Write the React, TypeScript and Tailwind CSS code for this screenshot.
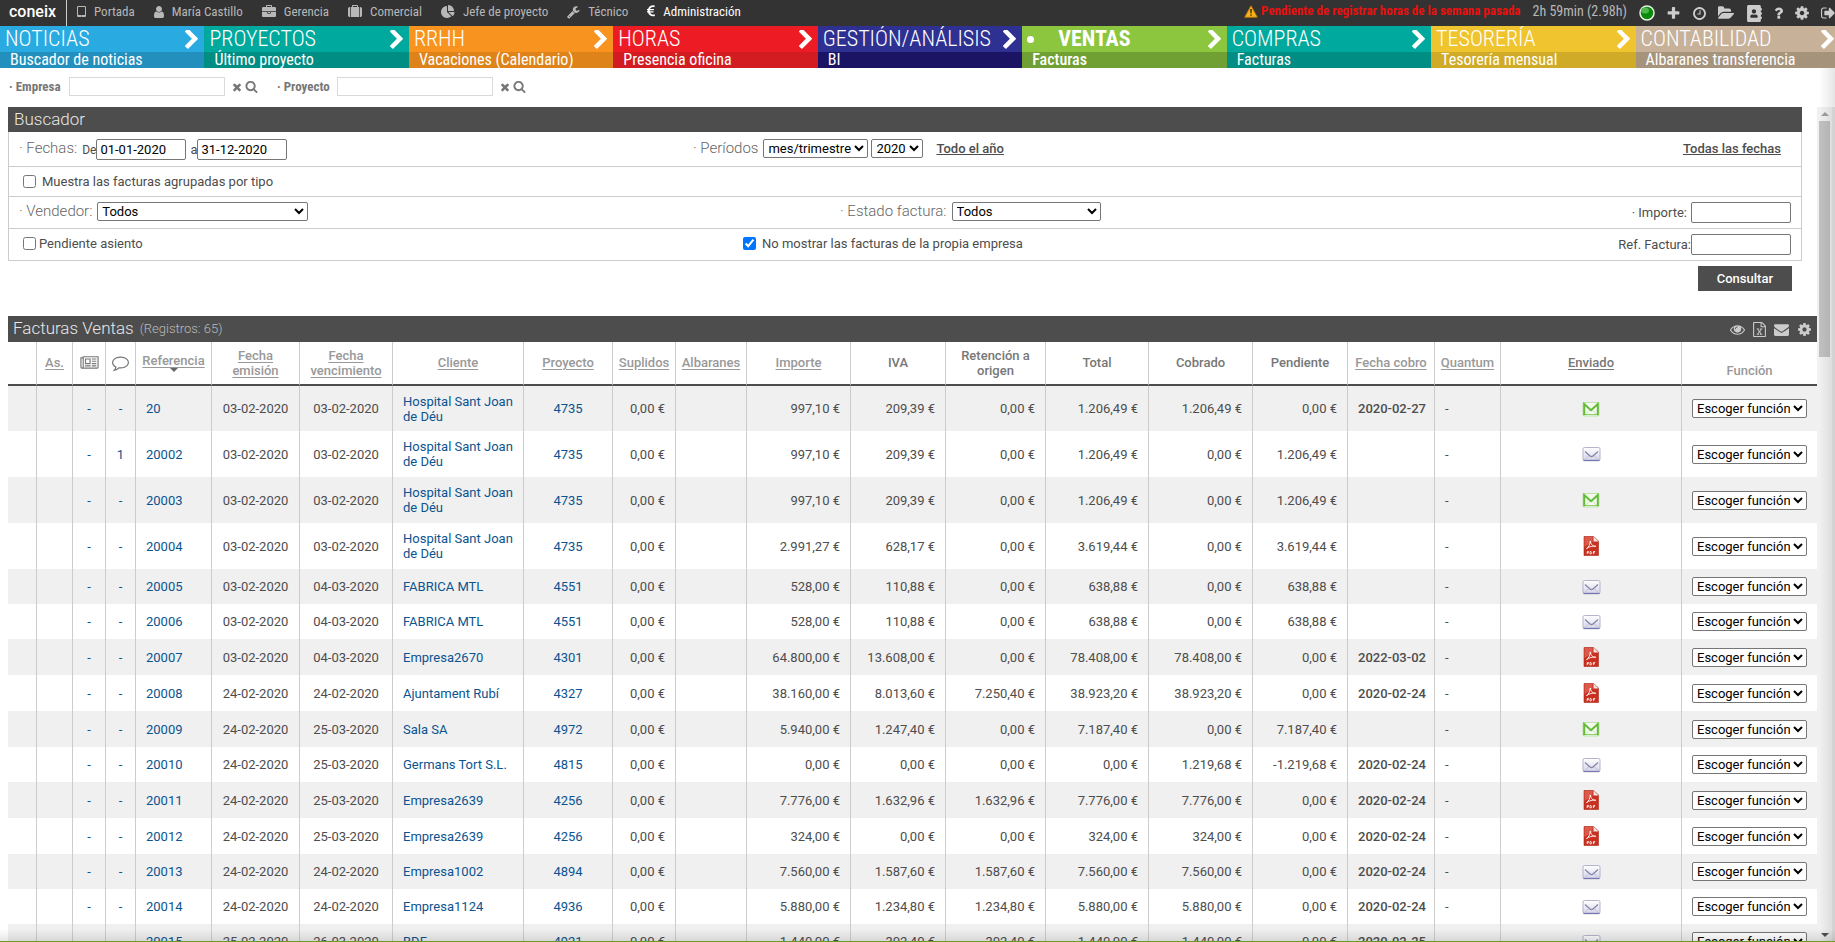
import React from "react";
import { FaAddressBook } from "react-icons/fa";

const ICONS = {
  tablet:
    "M960 1408q0-26-19-45t-45-19-45 19-19 45 19 45 45 19 45-19 19-45zm384-160v-960q0-13-9.500-22.500t-22.500-9.500h-832q-13 0-22.500 9.500t-9.500 22.500v960q0 13 9.500 22.500t22.500 9.500h832q13 0 22.500-9.500t9.500-22.500zm128-960v1088q0 66-47 113t-113 47h-832q-66 0-113-47t-47-113v-1088q0-66 47-113t113-47h832q66 0 113 47t47 113z",
  user:
    "M1536 1399q0 109-62.500 187t-150.500 78h-854q-88 0-150.500-78t-62.500-187q0-85 8.500-160.500t31.500-152 58.500-131 94-89 134.500-34.500q131 128 313 128t313-128q76 0 134.500 34.500t94 89 58.500 131 31.500 152 8.500 160.500zm-256-887q0 159-112.500 271.500t-271.500 112.500-271.500-112.500-112.500-271.500 112.500-271.500 271.500-112.500 271.500 112.500 112.500 271.500z",
  briefcase:
    "M640 256h512v-128h-512v128zm1152 640v480q0 66-47 113t-113 47h-1472q-66 0-113-47t-47-113v-480h672v160q0 26 19 45t45 19h320q26 0 45-19t19-45v-160h672zm-768 0v128h-256v-128h256zm768-480v384h-1792v-384q0-66 47-113t113-47h352v-160q0-40 28-68t68-28h576q40 0 68 28t28 68v160h352q66 0 113 47t47 113z",
  suitcase:
    "M640 256h512v-128h-512v128zm-352 0v1280h-64q-92 0-158-66t-66-158v-832q0-92 66-158t158-66h64zm1120 0v1280h-1024v-1280h128v-160q0-40 28-68t68-28h576q40 0 68 28t28 68v160h128zm384 224v832q0 92-66 158t-158 66h-64v-1280h64q92 0 158 66t66 158z",
  pie:
    "M768 890l546 546q-106 108-247.500 168t-298.500 60q-209 0-385.500-103t-279.500-279.500-103-385.500 103-385.500 279.500-279.500 385.500-103v762zm187 6h773q0 157-60 298.500t-168 247.500zm709-128h-768v-768q209 0 385.500 103t279.500 279.500 103 385.500z",
  wrench:
    "M448 1472q0-26-19-45t-45-19-45 19-19 45 19 45 45 19 45-19 19-45zm644-420l-682 682q-37 37-90 37-52 0-91-37l-106-108q-38-36-38-90 0-53 38-91l681-681q39 98 114.500 173.500t173.500 114.500zm634-435q0 39-23 106-47 134-164.500 217.500t-258.500 83.500q-185 0-316.500-131.500t-131.500-316.500 131.500-316.500 316.500-131.500q58 0 121.500 16.500t107.500 46.500q16 11 16 28t-16 28l-293 169v224l193 107q5-3 79-48.500t135.500-81 70.500-35.500q15 0 23.500 10t8.500 25z",
  euro:
    "M1362 1214l35 159q3 12-3 22.500t-17 14.500l-5 1q-4 2-10.500 3.500t-16 4.500-21.500 5.500-25.500 5-30 5-33.500 4.500-36.500 3-38.500 1q-234 0-409-130.500t-238-351.500h-95q-13 0-22.500-9.500t-9.500-22.500v-113q0-13 9.500-22.500t22.500-9.500h66q-2-57 1-105h-67q-14 0-23-9t-9-23v-114q0-14 9-23t23-9h98q67-210 243.500-338t400.500-128q102 0 194 23 11 3 20 15 6 11 3 24l-43 159q-3 13-14 19.500t-24 2.500l-4-1q-4-1-11.500-2.500l-17.500-3.500-22.500-3.500-26-3-29-2.500-29.500-1q-126 0-226 64t-150 176h468q16 0 25 12 10 12 7 26l-24 114q-5 26-32 26h-488q-3 37 0 105h459q15 0 25 12 9 12 6 27l-24 112q-2 11-11 18.500t-20 7.500h-387q48 117 149.500 185.500t228.500 68.500q18 0 36-1.500t33.500-3.500 29.500-4.500 24.500-5 18.500-4.500l12-3 5-2q13-5 26 2 12 7 15 21z",
  plus:
    "M1600 736v192q0 40-28 68t-68 28h-416v416q0 40-28 68t-68 28h-192q-40 0-68-28t-28-68v-416h-416q-40 0-68-28t-28-68v-192q0-40 28-68t68-28h416v-416q0-40 28-68t68-28h192q40 0 68 28t28 68v416h416q40 0 68 28t28 68z",
  clock:
    "M1024 544v448q0 14-9 23t-23 9h-320q-14 0-23-9t-9-23v-64q0-14 9-23t23-9h224v-352q0-14 9-23t23-9h64q14 0 23 9t9 23zm416 352q0-148-73-273t-198-198-273-73-273 73-198 198-73 273 73 273 198 198 273 73 273-73 198-198 73-273zm224 0q0 209-103 385.500t-279.500 279.500-385.500 103-385.500-103-279.500-279.500-103-385.500 103-385.500 279.500-279.500 385.500-103 385.500 103 279.500 279.500 103 385.500z",
  folder:
    "M1815 952q0 31-31 66l-336 396q-43 51-120.500 86.500t-143.500 35.500h-1088q-34 0-60.500-13t-26.500-43q0-31 31-66l336-396q43-51 120.500-86.500t143.500-35.500h1088q34 0 60.500 13t26.500 43zm-343-344v160h-832q-94 0-197 47.500t-164 119.500l-337 396-5 6q0-4-.5-12.500t-.5-12.500v-960q0-92 66-158t158-66h320q92 0 158 66t66 158v32h544q92 0 158 66t66 158z",
  question:
    "M1088 1256v240q0 16-12 28t-28 12h-240q-16 0-28-12t-12-28v-240q0-16 12-28t28-12h240q16 0 28 12t12 28zm316-600q0 54-15.500 101t-35 76.500-55 59.500-57.500 43.500-61 35.500q-41 23-68.500 65t-27.500 67q0 17-12 32.500t-28 15.500h-240q-15 0-25.500-18.500t-10.500-37.500v-45q0-83 65-156.500t143-108.500q59-27 84-56t25-76q0-42-46.500-74t-107.500-32q-65 0-108 29-35 25-107 115-13 16-31 16-12 0-25-8l-164-125q-13-10-15.500-25t5.500-28q160-266 464-266 80 0 161 31t146 83 106 127.500 41 158.500z",
  cog:
    "M1152 896q0-106-75-181t-181-75-181 75-75 181 75 181 181 75 181-75 75-181zm512-109v222q0 12-8 23t-20 13l-185 28q-19 54-39 91 35 50 107 138 10 12 10 25t-9 23q-27 37-99 108t-94 71q-12 0-26-9l-138-108q-44 23-91 38-16 136-29 186-7 28-36 28h-222q-14 0-24.500-8.500t-11.500-21.500l-28-184q-49-16-90-37l-141 107q-10 9-25 9-14 0-25-11-126-114-165-168-7-10-7-23 0-12 8-23 15-21 51-66.500t54-70.500q-27-50-41-99l-183-27q-13-2-21-12.500t-8-23.500v-222q0-12 8-23t19-13l186-28q14-46 39-92-40-57-107-138-10-12-10-24 0-10 9-23 26-36 98.500-107.500t94.500-71.500q13 0 26 10l138 107q44-23 91-38 16-136 29-186 7-28 36-28h222q14 0 24.500 8.500t11.500 21.500l28 184q49 16 90 37l142-107q9-9 24-9 13 0 25 10 129 119 165 170 7 8 7 22 0 12-8 23-15 21-51 66.500t-54 70.500q26 50 41 98l183 28q13 2 21 12.500t8 23.500z",
  exit:
    "M704 1440q0 4 1 20t.5 26.500-3 23.500-10 19.500-20.500 6.500h-320q-119 0-203.500-84.500t-84.500-203.500v-704q0-119 84.500-203.500t203.500-84.500h320q13 0 22.500 9.500t9.500 22.500q0 4 1 20t.5 26.500-3 23.500-10 19.500-20.500 6.500h-320q-66 0-113 47t-47 113v704q0 66 47 113t113 47h312l11.500 1 11.500 3 8 5.500 7 9 2 13.500zm928-544q0 26-19 45l-544 544q-19 19-45 19t-45-19-19-45v-288h-448q-26 0-45-19t-19-45v-384q0-26 19-45t45-19h448v-288q0-26 19-45t45-19 45 19l544 544q19 19 19 45z",
  chevron:
    "M1363 877l-742 742q-19 19-45 19t-45-19l-166-166q-19-19-19-45t19-45l531-531-531-531q-19-19-19-45t19-45l166-166q19-19 45-19t45 19l742 742q19 19 19 45t-19 45z",
  times:
    "M1490 1322q0 40-28 68l-136 136q-28 28-68 28t-68-28l-294-294-294 294q-28 28-68 28t-68-28l-136-136q-28-28-28-68t28-68l294-294-294-294q-28-28-28-68t28-68l136-136q28-28 68-28t68 28l294 294 294-294q28-28 68-28t68 28l136 136q28 28 28 68t-28 68l-294 294 294 294q28 28 28 68z",
  search:
    "M1216 832q0-185-131.500-316.500t-316.500-131.500-316.500 131.500-131.500 316.500 131.500 316.500 316.500 131.500 316.500-131.500 131.500-316.500zm512 832q0 52-38 90t-90 38q-54 0-90-38l-343-342q-179 124-399 124-143 0-273.500-55.500t-225-150-150-225-55.500-273.500 55.500-273.500 150-225 225-150 273.500-55.500 273.500 55.500 225 150 150 225 55.500 273.500q0 220-124 399l343 343q37 37 37 90z",
  eye:
    "M1664 960q-152-236-381-353 61 104 61 225 0 185-131.500 316.500t-316.500 131.500-316.500-131.500-131.500-316.500q0-121 61-225-229 117-381 353 133 205 333.500 326.500t434.500 121.500 434.500-121.500 333.500-326.500zm-720-384q0-20-14-34t-34-14q-125 0-214.500 89.500t-89.500 214.500q0 20 14 34t34 14 34-14 14-34q0-86 61-147t147-61q20 0 34-14t14-34zm848 384q0 34-20 69-140 230-376.500 368.500t-499.500 138.500-499.500-139-376.500-368q-20-35-20-69t20-69q140-229 376.500-368t499.500-139 499.500 139 376.500 368q20 35 20 69z",
  excel:
    "M1596 380q28 28 48 76t20 88v1152q0 40-28 68t-68 28h-1344q-40 0-68-28t-28-68v-1600q0-40 28-68t68-28h896q40 0 88 20t76 48zm-444-244v376h376q-10-29-22-41l-313-313q-12-12-41-22zm384 1528v-1024h-416q-40 0-68-28t-28-68v-416h-768v1536h1280zm-979-234v106h281v-106h-75l103-161q5-7 10-16.500t7.500-13.500 3.500-4h2q1 4 5 10 2 4 4.500 7.500t6 8 6.500 8.500l107 161h-76v106h291v-106h-68l-192-273 195-282h67v-107h-279v107h74l-103 159q-4 7-10 16.500t-9 13.500l-2 3h-2q-1-4-5-10-6-11-17-23l-106-159h76v-107h-290v107h68l189 272-194 283h-68z",
  envelope:
    "M1792 710v794q0 66-47 113t-113 47h-1472q-66 0-113-47t-47-113v-794q44 49 101 87 362 246 497 345 57 42 92.500 65.500t94.500 48 110 24.500h2q51 0 110-24.500t94.500-48 92.500-65.500q170-123 498-345 57-39 100-87zm0-294q0 79-49 151t-122 123q-376 261-468 325-10 7-42.500 31t-54 38.500-52 32.500-57.500 27-50 9h-2q-23 0-50-9t-57.500-27-52-32.500-54-38.500-42.500-31q-91-64-262-182.500t-205-142.500q-62-42-117-115.500t-55-136.500q0-78 41.500-130t118.500-52h1472q65 0 112.500 47t47.500 113z",
  comment:
    "M896 384q-204 0-381.500 69.500t-282 187.500-104.500 255q0 112 71.500 213.500t201.500 175.500l87 50-27 96q-24 91-70 172 152-63 275-171l43-38 57 6q69 8 130 8 204 0 381.500-69.500t282-187.500 104.500-255-104.500-255-282-187.500-381.500-69.500zm896 512q0 174-120 321.500t-326 233-450 85.500q-70 0-145-8-198 175-460 242-49 14-114 22h-5q-15 0-27-10.500t-16-27.500v-1q-3-4-.5-12t2-10 4.500-9.500l6-9 7-8.500 8-9q7-8 31-34.500t34.500-38 31-39.500 32.500-51 27-59 26-76q-157-89-247.500-220t-90.500-281q0-174 120-321.500t326-233 450-85.500 450 85.500 326 233 120 321.500z",
  news:
    "M1024 512h-384v384h384v-384zm128 640v128h-640v-128h640zm0-768v640h-640v-640h640zm640 768v128h-512v-128h512zm0-256v128h-512v-128h512zm0-256v128h-512v-128h512zm0-256v128h-512v-128h512zm-1536 960v-960h-128v960q0 26 19 45t45 19 45-19 19-45zm1664 0v-1088h-1536v1088q0 33-11 64h1483q26 0 45-19t19-45zm128-1216v1216q0 80-56 136t-136 56h-1664q-80 0-136-56t-56-136v-1088h256v-128h1792z",
};

type IconName = keyof typeof ICONS;

function Icon({ name, box = "0 0 1792 1792", className }: { name: IconName; box?: string; className: string }) {
  return (
    <svg viewBox={box} className={`shrink-0 fill-current ${className}`} aria-hidden="true">
      <path d={ICONS[name]} />
    </svg>
  );
}

const MENU: { icon: IconName; box: string; size: string; label: string; active?: boolean }[] = [
  { icon: "tablet", box: "320 0 1152 1792", size: "h-[14px] w-[9px]", label: "Portada" },
  { icon: "user", box: "256 0 1280 1792", size: "h-[14px] w-[10px]", label: "María Castillo" },
  { icon: "briefcase", box: "0 0 1792 1792", size: "h-[14px] w-[14px]", label: "Gerencia" },
  { icon: "suitcase", box: "0 0 1792 1792", size: "h-[14px] w-[14px]", label: "Comercial" },
  { icon: "pie", box: "0 0 1792 1792", size: "h-[14px] w-[14px]", label: "Jefe de proyecto" },
  { icon: "wrench", box: "64 0 1728 1792", size: "h-[14px] w-[13px]", label: "Técnico" },
  { icon: "euro", box: "384 0 1024 1792", size: "h-[14px] w-[8px]", label: "Administración", active: true },
];

const TABS = [
  { title: "NOTICIAS", sub: "Buscador de noticias", top: "bg-[#29abe2]", bottom: "bg-[#238fbd]" },
  { title: "PROYECTOS", sub: "Último proyecto", top: "bg-[#00a99d]", bottom: "bg-[#008d83]" },
  { title: "RRHH", sub: "Vacaciones (Calendario)", top: "bg-[#f7931e]", bottom: "bg-[#de831a]" },
  { title: "HORAS", sub: "Presencia oficina", top: "bg-[#ed1c24]", bottom: "bg-[#d31b22]" },
  { title: "GESTIÓN/ANÁLISIS", sub: "BI", top: "bg-[#2e3192]", bottom: "bg-[#1b1464]" },
  { title: "VENTAS", sub: "Facturas", top: "bg-[#8cc63f]", bottom: "bg-[#70a033]", active: true },
  { title: "COMPRAS", sub: "Facturas", top: "bg-[#00a99d]", bottom: "bg-[#008d83]" },
  { title: "TESORERÍA", sub: "Tesorería mensual", top: "bg-[#efc42f]", bottom: "bg-[#d0ab28]" },
  { title: "CONTABILIDAD", sub: "Albaranes transferencia", top: "bg-[#c7b299]", bottom: "bg-[#a6937c]" },
];

type Sent = "green" | "mail" | "pdf";
type Row = [string, string, string, string, string, string, string, string, string, string, string, string, string, Sent];

const HSJ = "Hospital Sant Joan de Déu";
const ROWS: Row[] = [
  ["-", "20", "03-02-2020", "03-02-2020", HSJ, "4735", "997,10", "209,39", "0,00", "1.206,49", "1.206,49", "0,00", "2020-02-27", "green"],
  ["1", "20002", "03-02-2020", "03-02-2020", HSJ, "4735", "997,10", "209,39", "0,00", "1.206,49", "0,00", "1.206,49", "", "mail"],
  ["-", "20003", "03-02-2020", "03-02-2020", HSJ, "4735", "997,10", "209,39", "0,00", "1.206,49", "0,00", "1.206,49", "", "green"],
  ["-", "20004", "03-02-2020", "03-02-2020", HSJ, "4735", "2.991,27", "628,17", "0,00", "3.619,44", "0,00", "3.619,44", "", "pdf"],
  ["-", "20005", "03-02-2020", "04-03-2020", "FABRICA MTL", "4551", "528,00", "110,88", "0,00", "638,88", "0,00", "638,88", "", "mail"],
  ["-", "20006", "03-02-2020", "04-03-2020", "FABRICA MTL", "4551", "528,00", "110,88", "0,00", "638,88", "0,00", "638,88", "", "mail"],
  ["-", "20007", "03-02-2020", "04-03-2020", "Empresa2670", "4301", "64.800,00", "13.608,00", "0,00", "78.408,00", "78.408,00", "0,00", "2022-03-02", "pdf"],
  ["-", "20008", "24-02-2020", "24-02-2020", "Ajuntament Rubí", "4327", "38.160,00", "8.013,60", "7.250,40", "38.923,20", "38.923,20", "0,00", "2020-02-24", "pdf"],
  ["-", "20009", "24-02-2020", "25-03-2020", "Sala SA", "4972", "5.940,00", "1.247,40", "0,00", "7.187,40", "0,00", "7.187,40", "", "green"],
  ["-", "20010", "24-02-2020", "25-03-2020", "Germans Tort S.L.", "4815", "0,00", "0,00", "0,00", "0,00", "1.219,68", "-1.219,68", "2020-02-24", "mail"],
  ["-", "20011", "24-02-2020", "25-03-2020", "Empresa2639", "4256", "7.776,00", "1.632,96", "1.632,96", "7.776,00", "7.776,00", "0,00", "2020-02-24", "pdf"],
  ["-", "20012", "24-02-2020", "25-03-2020", "Empresa2639", "4256", "324,00", "0,00", "0,00", "324,00", "324,00", "0,00", "2020-02-24", "pdf"],
  ["-", "20013", "24-02-2020", "24-02-2020", "Empresa1002", "4894", "7.560,00", "1.587,60", "1.587,60", "7.560,00", "7.560,00", "0,00", "2020-02-24", "mail"],
  ["-", "20014", "24-02-2020", "24-02-2020", "Empresa1124", "4936", "5.880,00", "1.234,80", "1.234,80", "5.880,00", "5.880,00", "0,00", "2020-02-24", "mail"],
  ["-", "20015", "25-02-2020", "26-03-2020", "BDF", "4921", "1.440,00", "302,40", "302,40", "1.440,00", "1.440,00", "0,00", "2020-02-25", "mail"],
];

const COLUMNS = [
  "w-[29px]", "w-[36px]", "w-[33px]", "w-[30px]", "w-[76px]", "w-[88px]", "w-[93px]", "w-[131px]", "w-[89px]", "w-[63px]", "w-[71px]",
  "w-[104px]", "w-[95px]", "w-[100px]", "w-[103px]", "w-[104px]", "w-[95px]", "w-[87px]", "w-[66px]", "w-[181px]", "w-[135px]",
];

function SentIcon({ kind }: { kind: Sent }) {
  if (kind === "green") {
    return (
      <svg viewBox="0 0 18 16" className="mx-auto h-4 w-[18px]" role="img" aria-label="Enviado">
        <rect x="1" y="1.500" width="16" height="13.500" rx="1" fill="#f3f9ee" stroke="#bfe2a8" strokeWidth="1" />
        <path d="M3 14l5-5.500M15 14l-5-5.500" stroke="#cfe3c0" fill="none" />
        <path d="M1.500 13.500h15" stroke="#8fd06c" fill="none" />
        <path d="M2.200 14.200V3L9 9.200 15.800 3v11.200" fill="none" stroke="#62bb38" strokeWidth="2" />
      </svg>
    );
  }
  if (kind === "mail") {
    return (
      <svg viewBox="0 0 19 16" className="mx-auto h-4 w-[19px]" role="img" aria-label="Correo">
        <defs>
          <linearGradient id="mailFill" x1="0" y1="0" x2="0" y2="1">
            <stop offset="0" stopColor="#ffffff" />
            <stop offset="1" stopColor="#d4d4ea" />
          </linearGradient>
        </defs>
        <rect x="1" y="1.500" width="17" height="13" rx="1.500" fill="url(#mailFill)" stroke="#b4b4cc" />
        <path d="M1.500 14.500h16" stroke="#7675ad" strokeWidth="1.300" />
        <path d="M2 14l5-4.500M17 14l-5-4.500" stroke="#c2c2d8" fill="none" />
        <path d="M3 5.500l5 4.500q1.500 1.300 3 0l5-4.500" stroke="#8583a6" strokeWidth="1.200" fill="none" />
      </svg>
    );
  }
  return (
    <svg viewBox="0 0 16 20" className="mx-auto h-5 w-4" role="img" aria-label="PDF">
      <path d="M1 .5h9.500L15.500 5v14.500H1z" fill="#c9301f" stroke="#a82a1e" strokeWidth=".6" />
      <path d="M1.500 1h8v5l-8 5z" fill="#dc5a4b" />
      <path d="M10.500.5L15.500 5.500h-5z" fill="#f3e4e2" />
      <path d="M3.500 12.500c2-1 3.600-4 3.800-7.500.5 3.500 2.500 5.500 5.500 5.200-3.500-.5-6.500.6-9.300 2.300z" fill="none" stroke="#fff" strokeWidth=".9" />
      <path d="M4.200 18v-2.500h1.200v1.200H4.200M7 15.500v2.500c1.500 0 1.700-.5 1.700-1.200S8.500 15.500 7 15.500M10.500 18v-2.500h1.700M10.500 16.700h1.300" stroke="#fff" strokeWidth=".8" fill="none" />
    </svg>
  );
}

function Head({ children, link = true, dark = false }: { children: React.ReactNode; link?: boolean; dark?: boolean }) {
  const color = dark ? "text-[#777]" : "text-[#999]";
  return (
    <th scope="col" className={`border-r border-[#ccc] px-1 pb-px text-center align-middle font-medium ${color}`}>
      {link ? (
        <a href="#" className="underline underline-offset-2">
          {children}
        </a>
      ) : (
        children
      )}
    </th>
  );
}

const CELL = "border-r border-[#ccc] px-[10px]";
const FIELD = "h-[21px] rounded-[2px] border border-[#767676] bg-white px-[3px] text-black";
const SELECT = "h-[19px] rounded-[2px] border border-[#767676] bg-white text-black";
const LABEL = "text-[15px] font-light leading-[19px] text-[#666]";

function Euro({ value }: { value: string }) {
  return <td className={`${CELL} text-right whitespace-nowrap`}>{value} €</td>;
}

function TopBar() {
  return (
    <header className="flex h-[26px] shrink-0 items-center overflow-hidden bg-[#333] font-['Roboto_Condensed','Roboto',sans-serif] text-[13px] whitespace-nowrap text-[#b8b8b8]">
      <a href="#" className="flex h-full w-[67px] shrink-0 items-center border-r border-[#ccc] pb-[3px] pl-[9px] font-['Roboto',sans-serif] text-[16px] font-medium text-white">
        coneix
      </a>
      <nav className="flex gap-[19px] pb-[2px] pl-[10px]">
        {MENU.map((m) => (
          <a key={m.label} href="#" className={`flex items-center gap-2 ${m.active ? "text-white" : ""}`}>
            <Icon name={m.icon} box={m.box} className={m.size} />
            {m.label}
          </a>
        ))}
      </nav>
      <div className="ml-auto flex items-center">
        <div className="flex items-center gap-[3px] pb-1 font-bold text-[#e8110f]">
          <svg viewBox="0 0 14 13" className="h-[13px] w-[14px]" aria-hidden="true">
            <path d="M7 .8L13.300 12.200H.7z" fill="#f9b21c" stroke="#c98000" strokeWidth=".8" strokeLinejoin="round" />
            <path d="M6.200 4h1.600l-.3 4.500h-1zM6.300 9.400h1.400v1.400H6.300z" fill="#2b2100" />
          </svg>
          Pendiente de registrar horas de la semana pasada
        </div>
        <span className="pb-1 pl-3 text-[14px]">2h 59min (2.98h)</span>
        <div className="flex items-center gap-[11px] pl-3 text-[#ccc]">
          <svg viewBox="0 0 16 16" className="size-4" role="img" aria-label="Conectado">
            <circle cx="8" cy="8" r="7" fill="#0a8a0a" stroke="#e6f2e6" strokeWidth="1.500" />
            <ellipse cx="6" cy="5.500" rx="4" ry="3" fill="#4fb84a" />
          </svg>
          <button type="button" aria-label="Añadir"><Icon name="plus" className="size-[15px]" /></button>
          <button type="button" aria-label="Historial"><Icon name="clock" className="size-[15px]" /></button>
          <button type="button" aria-label="Carpetas"><Icon name="folder" box="0 0 1920 1792" className="h-4 w-[17px]" /></button>
          <button type="button" aria-label="Agenda"><FaAddressBook className="size-[17px]" /></button>
          <button type="button" aria-label="Ayuda"><Icon name="question" box="384 0 1024 1792" className="h-4 w-[9px]" /></button>
          <button type="button" aria-label="Ajustes"><Icon name="cog" className="size-4" /></button>
          <button type="button" aria-label="Salir"><Icon name="exit" box="64 0 1600 1792" className="h-4 w-[14px]" /></button>
        </div>
      </div>
    </header>
  );
}

function Tabs() {
  return (
    <div className="shrink-0 overflow-hidden">
      <nav className="grid w-[calc(100%+5px)] grid-cols-9 font-['Roboto_Condensed','Roboto',sans-serif] text-white">
        {TABS.map((t) => (
          <div key={t.title}>
            <a href="#" className={`flex h-[26px] items-center justify-between pr-[6px] pl-[5px] text-[22px] leading-6 whitespace-nowrap ${t.top} ${t.active ? "font-bold" : "font-light"}`}>
              {t.active ? (
                <span className="flex items-center gap-6">
                  <span className="size-[7px] rounded-full bg-white" />
                  {t.title}
                </span>
              ) : (
                <span>{t.title}</span>
              )}
              <Icon name="chevron" box="346 146 1036 1492" className="h-[19px] w-[13px]" />
            </a>
            <a href="#" className={`block h-4 pl-[10px] text-[16px] leading-4 whitespace-nowrap ${t.bottom} ${t.active ? "font-medium" : ""}`}>
              {t.sub}
            </a>
          </div>
        ))}
      </nav>
    </div>
  );
}

function QuickFilter({ id, label }: { id: string; label: string }) {
  return (
    <div className="flex items-center">
      <label htmlFor={id} className="w-[60px] font-['Roboto_Condensed','Roboto',sans-serif] font-bold">
        · {label}
      </label>
      <input id={id} type="text" className="h-[19px] w-[156px] border border-[#d9d9d9] px-1" />
      <button type="button" aria-label={`Borrar ${label}`} className="ml-[6px]">
        <Icon name="times" className="size-3" />
      </button>
      <button type="button" aria-label={`Buscar ${label}`} className="ml-[2px]">
        <Icon name="search" className="size-[13px]" />
      </button>
    </div>
  );
}

function SearchPanel() {
  return (
    <form className="mr-[15px]" onSubmit={(e) => e.preventDefault()}>
      <h2 className="h-[25px] bg-[#4d4d4d] pl-[6px] text-[17px] leading-6 font-light text-[#e8e8e8]">Buscador</h2>
      <div className="divide-y divide-[#ccc] border border-t-0 border-[#ccc]">
        <div className="grid h-[35px] grid-cols-[684px_1fr_auto] items-start pt-[7px]">
          <div className="flex pl-[10px]">
            <span className={LABEL}>· Fechas:</span>
            <label className="flex items-center pl-[5px] text-[12px]">
              De
              <input type="text" defaultValue="01-01-2020" className={`${FIELD} w-[90px] text-[13px]`} />
            </label>
            <label className="flex items-center pl-1">
              a
              <input type="text" defaultValue="31-12-2020" className={`${FIELD} w-[90px]`} />
            </label>
          </div>
          <div className="flex">
            <label htmlFor="periodo" className={`${LABEL} mr-[5px]`}>· Períodos</label>
            <select id="periodo" className={`${SELECT} w-[105px]`}>
              <option>mes/trimestre</option>
            </select>
            <select aria-label="Año" className={`${SELECT} ml-[3px] w-[52px]`}>
              <option>2020</option>
            </select>
            <a href="#" className="ml-[13px] leading-[19px] font-medium underline">Todo el año</a>
          </div>
          <a href="#" className="mr-5 leading-[19px] font-medium underline">Todas las fechas</a>
        </div>
        <div className="flex h-[30px] items-center">
          <label className="flex items-center gap-[6px] pl-[14px]">
            <input type="checkbox" className="size-[13px]" />
            Muestra las facturas agrupadas por tipo
          </label>
        </div>
        <div className="grid h-[32px] grid-cols-[831px_1fr_auto] items-start pt-[5px]">
          <div className="flex pl-[10px]">
            <label htmlFor="vendedor" className={`${LABEL} mr-[5px]`}>· Vendedor:</label>
            <select id="vendedor" className={`${SELECT} w-[211px]`}>
              <option>Todos</option>
            </select>
          </div>
          <div className="flex">
            <label htmlFor="estado" className={`${LABEL} mr-[5px]`}>· Estado factura:</label>
            <select id="estado" className={`${SELECT} w-[149px]`}>
              <option>Todos</option>
            </select>
          </div>
          <label className="mr-[10px] flex items-center gap-1">
            · Importe:
            <input type="text" className={`${FIELD} w-[100px]`} />
          </label>
        </div>
        <div className="grid h-[31px] grid-cols-[734px_1fr_auto] items-start pt-[5px]">
          <label className="flex h-[19px] items-center gap-[3px] pl-[14px]">
            <input type="checkbox" className="size-[13px]" />
            Pendiente asiento
          </label>
          <label className="flex h-[19px] items-center gap-[6px]">
            <input type="checkbox" defaultChecked className="size-[13px]" />
            No mostrar las facturas de la propia empresa
          </label>
          <label className="mr-[10px] flex items-center">
            Ref. Factura:
            <input type="text" className={`${FIELD} w-[100px]`} />
          </label>
        </div>
      </div>
      <div className="flex justify-end pt-[5px] pr-[10px]">
        <button type="submit" className="h-[25px] bg-[#4d4d4d] px-[19px] font-medium text-white">Consultar</button>
      </div>
    </form>
  );
}

function InvoiceTable() {
  return (
    <section className="mt-[25px]">
      <div className="flex h-[26px] items-center bg-[#4d4d4d] px-[5px]">
        <h2 className="text-[17px] font-light text-[#e8e8e8]">Facturas Ventas</h2>
        <span className="ml-[6px] font-light text-[#bbb]">(Registros: 65)</span>
        <div className="ml-auto flex items-center gap-[8px] text-[#ccc]">
          <button type="button" aria-label="Ver"><Icon name="eye" className="size-[15px]" /></button>
          <button type="button" aria-label="Exportar a Excel"><Icon name="excel" box="128 0 1536 1792" className="h-[15px] w-[13px]" /></button>
          <button type="button" aria-label="Enviar"><Icon name="envelope" className="size-[15px]" /></button>
          <button type="button" aria-label="Configurar"><Icon name="cog" className="size-[15px]" /></button>
        </div>
      </div>
      <table className="w-full table-fixed border-separate border-spacing-0 leading-[15px]">
        <colgroup>
          {COLUMNS.map((w, i) => (
            <col key={i} className={w} />
          ))}
        </colgroup>
        <thead className="[&_th]:border-b-2 [&_th]:border-b-[#4d4d4d]">
          <tr className="h-[44px]">
            <th scope="col" aria-label="Selección" className="border-r border-[#ccc]" />
            <Head>As.</Head>
            <Head dark link={false}><Icon name="news" box="0 0 2048 1792" className="mx-auto h-4 w-[19px]" /></Head>
            <Head dark link={false}><Icon name="comment" className="mx-auto size-[17px]" /></Head>
            <Head>
              Referencia
              <span className="mx-auto block h-0 w-0 border-x-4 border-t-4 border-x-transparent border-t-[#666]" />
            </Head>
            <Head>Fecha emisión</Head>
            <Head>Fecha vencimiento</Head>
            <Head>Cliente</Head>
            <Head>Proyecto</Head>
            <Head>Suplidos</Head>
            <Head>Albaranes</Head>
            <Head>Importe</Head>
            <Head dark link={false}>IVA</Head>
            <Head dark link={false}>Retención a origen</Head>
            <Head dark link={false}>Total</Head>
            <Head dark link={false}>Cobrado</Head>
            <Head dark link={false}>Pendiente</Head>
            <Head>Fecha cobro</Head>
            <Head>Quantum</Head>
            <Head dark>Enviado</Head>
            <th scope="col" className="pb-[6px] align-bottom font-medium text-[#999]">Función</th>
          </tr>
        </thead>
        <tbody>
          {ROWS.map((r, i) => {
            const [notes, ref, issued, due, client, project, amount, vat, held, total, paid, pending, paidOn, sent] = r;
            const height = i === 0 ? "h-[45px]" : client === HSJ ? "h-[46px]" : sent === "mail" ? "h-[35px]" : "h-[36px]";
            return (
              <tr key={ref} className={`${height} odd:bg-[#f0f0f0] [&_a]:text-[#0b5490]`}>
                <td className={CELL} />
                <td className={CELL} />
                <td className="border-r border-[#ccc] text-center"><a href="#">-</a></td>
                <td className="border-r border-[#ccc] text-center"><a href="#">{notes}</a></td>
                <td className={CELL}><a href="#">{ref}</a></td>
                <td className={`${CELL} text-center whitespace-nowrap`}>{issued}</td>
                <td className={`${CELL} text-center whitespace-nowrap`}>{due}</td>
                <td className={CELL}><a href="#">{client}</a></td>
                <td className={`${CELL} text-center`}><a href="#">{project}</a></td>
                <Euro value="0,00" />
                <td className={CELL} />
                <Euro value={amount} />
                <Euro value={vat} />
                <Euro value={held} />
                <Euro value={total} />
                <Euro value={paid} />
                <Euro value={pending} />
                <td className={`${CELL} text-center font-medium whitespace-nowrap`}>{paidOn}</td>
                <td className={CELL}>-</td>
                <td className={CELL}><SentIcon kind={sent} /></td>
                <td className="px-[10px]">
                  <select aria-label={`Función ${ref}`} className={`${SELECT} block w-full`}>
                    <option>Escoger función</option>
                  </select>
                </td>
              </tr>
            );
          })}
        </tbody>
      </table>
    </section>
  );
}

export default function App() {
  return (
    <div className="relative flex h-screen flex-col overflow-hidden border-b border-[#6a9a2d] bg-white font-['Roboto',sans-serif] text-[13px] text-[#4d4d4d]">
      <TopBar />
      <Tabs />
      <div className="flex h-[39px] shrink-0 items-center gap-[19px] pb-[2px] pl-[9px] text-[#777]">
        <QuickFilter id="empresa" label="Empresa" />
        <QuickFilter id="proyecto" label="Proyecto" />
      </div>
      <div className="flex min-h-0 flex-1">
        <main className="min-w-0 flex-1 overflow-hidden pl-2">
          <SearchPanel />
          <InvoiceTable />
        </main>
        <div className="flex w-[15px] shrink-0 flex-col items-center bg-[#f1f1f1]" aria-hidden="true">
          <span className="mt-[5px] h-0 w-0 border-x-4 border-b-4 border-x-transparent border-b-[#a0a0a0]" />
          <span className="mt-[5px] h-[236px] w-[11px] bg-[#c1c1c1]" />
          <span className="mt-auto mb-1 h-0 w-0 border-x-4 border-t-4 border-x-transparent border-t-[#505050]" />
        </div>
        <div className="w-[3px] shrink-0 bg-[#e8e8e8]" />
      </div>
      <div className="pointer-events-none absolute inset-x-0 bottom-0 h-3 bg-linear-to-t from-black/10 to-transparent" />
      <div className="pointer-events-none absolute top-[68px] right-0 bottom-0 w-4 bg-linear-to-l from-black/10 to-transparent" />
    </div>
  );
}
